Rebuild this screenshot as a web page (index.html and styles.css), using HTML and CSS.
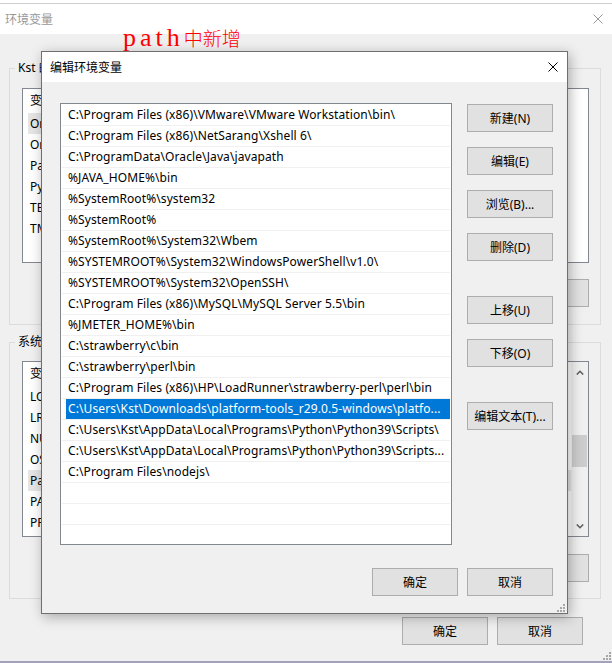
FILE: index.html
```html
<!DOCTYPE html>
<html lang="zh-CN">
<head>
    <meta charset="UTF-8">
    <title>环境变量</title>
    <link rel="stylesheet" href="styles.css">
</head>
<body>
    <!-- Background window: 环境变量 -->
    <div class="window">
        <div class="top-strip"></div>
        <div class="titlebar inactive">
            <span>环境变量</span>
            <svg class="close" width="10" height="10" viewBox="0 0 10 10"><path d="M0.5 0.5 L9.5 9.5 M9.5 0.5 L0.5 9.5" stroke="currentColor" stroke-width="1"/></svg>
        </div>
        <div class="window-body">
            <!-- User variables -->
            <div class="group">
                <div class="group-title">Kst 的用户变量(U)</div>
                <div class="listview user-list">
                    <div class="lv-content">
                        <div class="lv-head"><span class="col-name">变量</span><span class="col-value">值</span></div>
                        <div class="lv-row selected"><span class="col-name">OneDrive</span><span class="col-value">C:\Users\Kst\OneDrive</span></div>
                        <div class="lv-row"><span class="col-name">OneDriveConsumer</span><span class="col-value">C:\Users\Kst\OneDrive</span></div>
                        <div class="lv-row"><span class="col-name">Path</span><span class="col-value">C:\Users\Kst\AppData\Local\Microsoft\WindowsApps;</span></div>
                        <div class="lv-row"><span class="col-name">PyCharm Community Edition</span><span class="col-value">D:\PyCharm\bin;</span></div>
                        <div class="lv-row"><span class="col-name">TEMP</span><span class="col-value">C:\Users\Kst\AppData\Local\Temp</span></div>
                        <div class="lv-row"><span class="col-name">TMP</span><span class="col-value">C:\Users\Kst\AppData\Local\Temp</span></div>
                    </div>
                </div>
                <div class="button-row">
                    <button class="btn">新建(N)...</button>
                    <button class="btn">编辑(E)...</button>
                    <button class="btn">删除(D)</button>
                </div>
            </div>
            <!-- System variables -->
            <div class="group">
                <div class="group-title">系统变量(S)</div>
                <div class="listview system-list">
                    <div class="lv-content">
                        <div class="lv-head"><span class="col-name">变量</span><span class="col-value">值</span></div>
                        <div class="lv-row"><span class="col-name">LOADRUNNER</span><span class="col-value">C:\Program Files (x86)\HP\LoadRunner</span></div>
                        <div class="lv-row"><span class="col-name">LR_PATH</span><span class="col-value">C:\Program Files (x86)\HP\LoadRunner\</span></div>
                        <div class="lv-row"><span class="col-name">NUMBER_OF_PROCESSORS</span><span class="col-value">8</span></div>
                        <div class="lv-row"><span class="col-name">OS</span><span class="col-value">Windows_NT</span></div>
                        <div class="lv-row selected"><span class="col-name">Path</span><span class="col-value">C:\Program Files (x86)\VMware\VMware Workstation\bin\</span></div>
                        <div class="lv-row"><span class="col-name">PATHEXT</span><span class="col-value">.COM;.EXE;.BAT;.CMD;.VBS;.VBE;.JS</span></div>
                        <div class="lv-row"><span class="col-name">PROCESSOR_ARCHITECTURE</span><span class="col-value">AMD64</span></div>
                    </div>
                    <div class="scrollbar">
                        <div class="sb-arrow"><svg width="8" height="5" viewBox="0 0 8 5"><path d="M0.8 4.5 L4 1.3 L7.2 4.5" fill="none" stroke="#606060" stroke-width="1.6"/></svg></div>
                        <div class="sb-track"><div class="sb-thumb"></div></div>
                        <div class="sb-arrow"><svg width="8" height="5" viewBox="0 0 8 5"><path d="M0.8 0.5 L4 3.7 L7.2 0.5" fill="none" stroke="#606060" stroke-width="1.6"/></svg></div>
                    </div>
                </div>
                <div class="button-row">
                    <button class="btn">新建(W)...</button>
                    <button class="btn">编辑(I)...</button>
                    <button class="btn">删除(L)</button>
                </div>
            </div>
            <div class="button-row window-actions">
                <button class="btn">确定</button>
                <button class="btn">取消</button>
            </div>
        </div>
        <svg class="grip window-grip" width="8" height="8" viewBox="0 0 8 8"><path d="M6 0h2v2h-2z M6 3h2v2h-2z M3 3h2v2h-2z M6 6h2v2h-2z M3 6h2v2h-2z M0 6h2v2h-2z" fill="#a8a8a8"/></svg>
    </div>
    <div class="bottom-strip"></div>

    <!-- Red note over the screenshot -->
    <div class="annotation"><span class="latin">path</span><span class="cjk">中新增</span></div>

    <!-- Edit dialog: 编辑环境变量 -->
    <div class="dialog">
        <div class="titlebar">
            <span>编辑环境变量</span>
            <svg class="close" width="10" height="10" viewBox="0 0 10 10"><path d="M0.5 0.5 L9.5 9.5 M9.5 0.5 L0.5 9.5" stroke="currentColor" stroke-width="1"/></svg>
        </div>
        <div class="dialog-body">
            <ul class="path-list">
                <li><div class="cell">C:\Program Files (x86)\VMware\VMware Workstation\bin\</div></li>
                <li><div class="cell">C:\Program Files (x86)\NetSarang\Xshell 6\</div></li>
                <li><div class="cell">C:\ProgramData\Oracle\Java\javapath</div></li>
                <li><div class="cell">%JAVA_HOME%\bin</div></li>
                <li><div class="cell">%SystemRoot%\system32</div></li>
                <li><div class="cell">%SystemRoot%</div></li>
                <li><div class="cell">%SystemRoot%\System32\Wbem</div></li>
                <li><div class="cell">%SYSTEMROOT%\System32\WindowsPowerShell\v1.0\</div></li>
                <li><div class="cell">%SYSTEMROOT%\System32\OpenSSH\</div></li>
                <li><div class="cell">C:\Program Files (x86)\MySQL\MySQL Server 5.5\bin</div></li>
                <li><div class="cell">%JMETER_HOME%\bin</div></li>
                <li><div class="cell">C:\strawberry\c\bin</div></li>
                <li><div class="cell">C:\strawberry\perl\bin</div></li>
                <li><div class="cell">C:\Program Files (x86)\HP\LoadRunner\strawberry-perl\perl\bin</div></li>
                <li class="selected"><div class="cell">C:\Users\Kst\Downloads\platform-tools_r29.0.5-windows\platfo...</div></li>
                <li><div class="cell">C:\Users\Kst\AppData\Local\Programs\Python\Python39\Scripts\</div></li>
                <li><div class="cell">C:\Users\Kst\AppData\Local\Programs\Python\Python39\Scripts...</div></li>
                <li><div class="cell">C:\Program Files\nodejs\</div></li>
                <li><div class="cell"></div></li>
                <li><div class="cell"></div></li>
                <li><div class="cell"></div></li>
            </ul>
            <div class="side-buttons">
                <button class="btn">新建(N)</button>
                <button class="btn">编辑(E)</button>
                <button class="btn">浏览(B)...</button>
                <button class="btn">删除(D)</button>
                <button class="btn sep">上移(U)</button>
                <button class="btn">下移(O)</button>
                <button class="btn sep">编辑文本(T)...</button>
            </div>
            <div class="button-row dialog-actions">
                <button class="btn">确定</button>
                <button class="btn">取消</button>
            </div>
        </div>
        <svg class="grip dialog-grip" width="8" height="8" viewBox="0 0 8 8"><path d="M6 0h2v2h-2z M6 3h2v2h-2z M3 3h2v2h-2z M6 6h2v2h-2z M3 6h2v2h-2z M0 6h2v2h-2z" fill="#a8a8a8"/></svg>
    </div>
</body>
</html>
```

FILE: styles.css
```css
/* Base */
body {
    margin: 0;
    width: 612px;
    height: 663px;
    overflow: hidden;
    position: relative;
    background: #f0f0f0;
    font-family: "Noto Sans", "Noto Sans CJK SC", sans-serif;
    font-size: 12px;
    color: #000;
}

ul {
    margin: 0;
    padding: 0;
    list-style: none;
}

/* Buttons */
.btn {
    width: 86px;
    height: 28px;
    box-sizing: border-box;
    padding: 0;
    border: 1px solid #adadad;
    background: #e1e1e1;
    font-family: inherit;
    font-size: 12px;
    color: #000;
}

.button-row {
    display: flex;
    justify-content: flex-end;
    gap: 9px;
}

/* Title bars */
.titlebar {
    height: 30px;
    background: #fff;
    display: flex;
    align-items: center;
    justify-content: space-between;
    padding: 0 9px 0 8px;
}

.titlebar.inactive {
    color: #999;
    padding-left: 5px;
}

.close {
    display: block;
}

/* Background window */
.window {
    position: relative;
    height: 661px;
    background: #f0f0f0;
}

.top-strip {
    height: 3px;
    background: #fff;
    border-bottom: 1px solid #cfcfcf;
}

.window-body {
    padding: 34px 11px 0 9px;
}

.group {
    border: 1px solid #dcdcdc;
    padding: 0 11px 17px 12px;
}

.group + .group {
    margin-top: 17px;
    padding-bottom: 16px;
}

.group-title {
    width: fit-content;
    margin: -9px 0 0 -7px;
    padding: 0 3px;
    line-height: 16px;
    background: #f0f0f0;
}

.listview {
    display: flex;
    box-sizing: border-box;
    border: 1px solid #828790;
    background: #fff;
    overflow: hidden;
}

.user-list {
    height: 175px;
    margin-top: 12px;
}

.system-list {
    height: 176px;
    margin-top: 11px;
}

.lv-content {
    flex: 1;
    min-width: 0;
}

.lv-head {
    display: flex;
    height: 24px;
    line-height: 23px;
}

.lv-head .col-name {
    padding-left: 7px;
    border-right: 1px solid #e5e5e5;
}

.lv-row {
    display: flex;
    height: 21px;
    line-height: 21px;
    margin-left: 5px;
    white-space: nowrap;
}

.user-list .lv-row {
    max-width: 530px;
}

.lv-row .col-name {
    padding-left: 2px;
}

.lv-row.selected {
    background: #e5e5e5;
}

.col-name {
    width: 190px;
    flex-shrink: 0;
    overflow: hidden;
}

.col-value {
    padding-left: 8px;
    overflow: hidden;
}

.group .button-row {
    margin-top: 16px;
}

.group + .group .button-row {
    margin-top: 17px;
}

.scrollbar {
    width: 17px;
    display: flex;
    flex-direction: column;
    background: #f0f0f0;
}

.sb-arrow {
    height: 20px;
    display: flex;
    align-items: center;
    justify-content: center;
}

.sb-track {
    flex: 1;
}

.sb-thumb {
    height: 32px;
    margin: 53px 1px 0;
    background: #cdcdcd;
}

.window-actions {
    margin: 18px 18px 0 0;
}

.grip {
    position: absolute;
    display: block;
}

.window-grip {
    right: 1px;
    bottom: 1px;
}

.bottom-strip {
    height: 2px;
    background: #a4a1bd;
}

/* Red note */
.annotation {
    position: absolute;
    left: 123px;
    top: 24px;
    color: #f00;
    line-height: 28px;
    white-space: nowrap;
}

.annotation .latin {
    font-family: "Liberation Serif", serif;
    font-size: 26px;
    letter-spacing: 4px;
}

.annotation .cjk {
    font-family: "Noto Sans CJK SC", sans-serif;
    font-size: 19px;
    font-weight: 300;
}

/* Edit dialog */
.dialog {
    position: absolute;
    left: 41px;
    top: 51px;
    width: 527px;
    box-sizing: border-box;
    border: 1px solid #6f6f6f;
    background: #f0f0f0;
    box-shadow: 2px 3px 12px rgba(0, 0, 0, 0.3);
}

.dialog-body {
    display: grid;
    grid-template-columns: 392px 86px;
    column-gap: 15px;
    padding: 21px 14px 17px 18px;
}

.path-list {
    height: 442px;
    box-sizing: border-box;
    padding-top: 1px;
    border: 1px solid #828790;
    background: #fff;
    overflow: hidden;
}

.path-list li {
    margin: 0 1px;
    height: 20px;
    border-bottom: 1px solid #f0f0f0;
}

.path-list .cell {
    height: 20px;
    line-height: 20px;
    margin-left: 4px;
    padding-left: 2px;
    letter-spacing: 0.1px;
    white-space: nowrap;
    overflow: hidden;
    text-overflow: ellipsis;
}

.path-list .selected .cell {
    background: #0078d7;
    color: #fff;
}

.side-buttons {
    display: flex;
    flex-direction: column;
    padding-top: 1px;
}

.side-buttons .btn + .btn {
    margin-top: 15px;
}

.side-buttons .btn.sep {
    margin-top: 35px;
}

.dialog-actions {
    grid-column: 1 / -1;
    margin-top: 23px;
}

.dialog-grip {
    right: 2px;
    bottom: 1px;
}
```
